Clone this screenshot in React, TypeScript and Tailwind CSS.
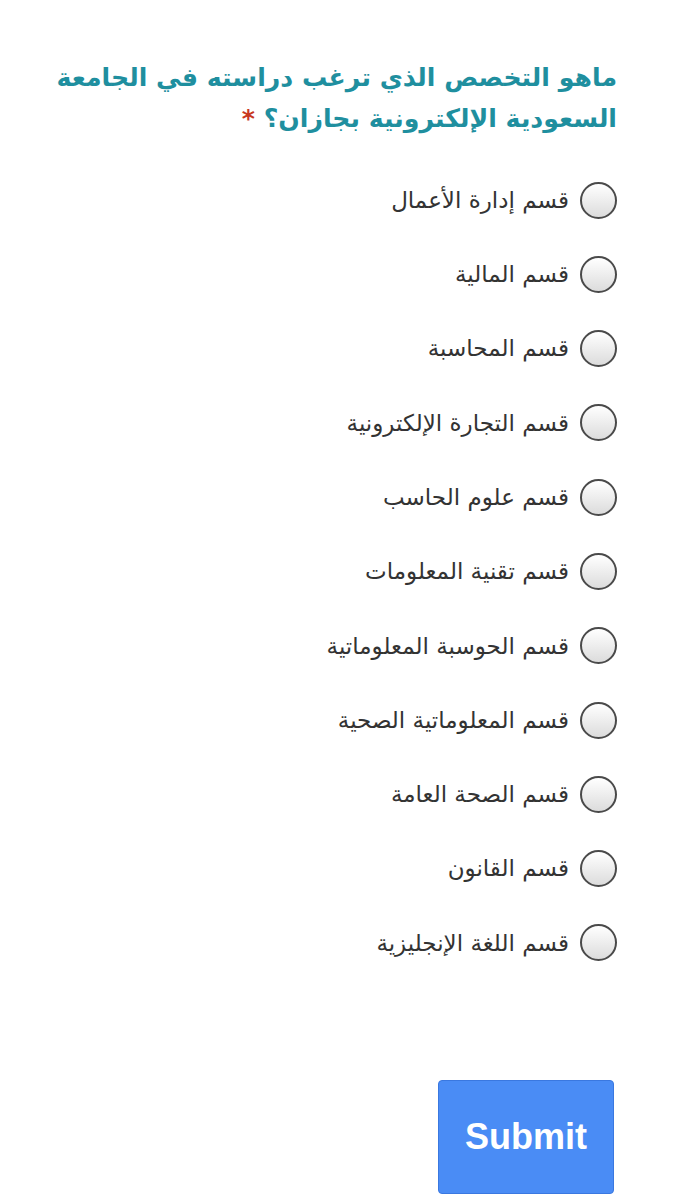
import React from "react";

const options = [
  "قسم إدارة الأعمال",
  "قسم المالية",
  "قسم المحاسبة",
  "قسم التجارة الإلكترونية",
  "قسم علوم الحاسب",
  "قسم تقنية المعلومات",
  "قسم الحوسبة المعلوماتية",
  "قسم المعلوماتية الصحية",
  "قسم الصحة العامة",
  "قسم القانون",
  "قسم اللغة الإنجليزية",
];

export default function App() {
  return (
    <div
      dir="rtl"
      className="w-[691px] h-[1200px] bg-white overflow-hidden pr-[74px] pl-[40px] pt-[57px]"
      style={{ fontFamily: '"DejaVu Sans", "Noto Sans", sans-serif' }}
    >
      <h1 className="text-[25.2px] leading-[41px] font-bold text-[#1f8f9f] whitespace-nowrap">
        ماهو التخصص الذي ترغب دراسته في الجامعة
        <br />
        السعودية الإلكترونية بجازان؟{" "}
        <span className="text-[#c8381f]">*</span>
      </h1>
      <div className="mt-[43px] flex flex-col gap-[38.3px]">
        {options.map((o) => (
          <label key={o} className="flex items-center gap-[11px] h-[36px]">
            <span className="w-[37px] h-[37px] shrink-0 rounded-full border-2 border-[#4a4a4a] bg-gradient-to-b from-[#ffffff] to-[#dcdcdc]" />
            <span className="text-[23px] text-[#333333]">{o}</span>
          </label>
        ))}
      </div>
      <div className="mt-[119px] flex pr-[3px]">
        <button
          className="w-[176px] h-[114px] rounded-[4px] border border-[#3a78e0] bg-[#4a8cf5] text-white text-[36px] font-bold"
          style={{ fontFamily: '"Liberation Sans", Arial, sans-serif' }}
        >
          Submit
        </button>
      </div>
    </div>
  );
}
